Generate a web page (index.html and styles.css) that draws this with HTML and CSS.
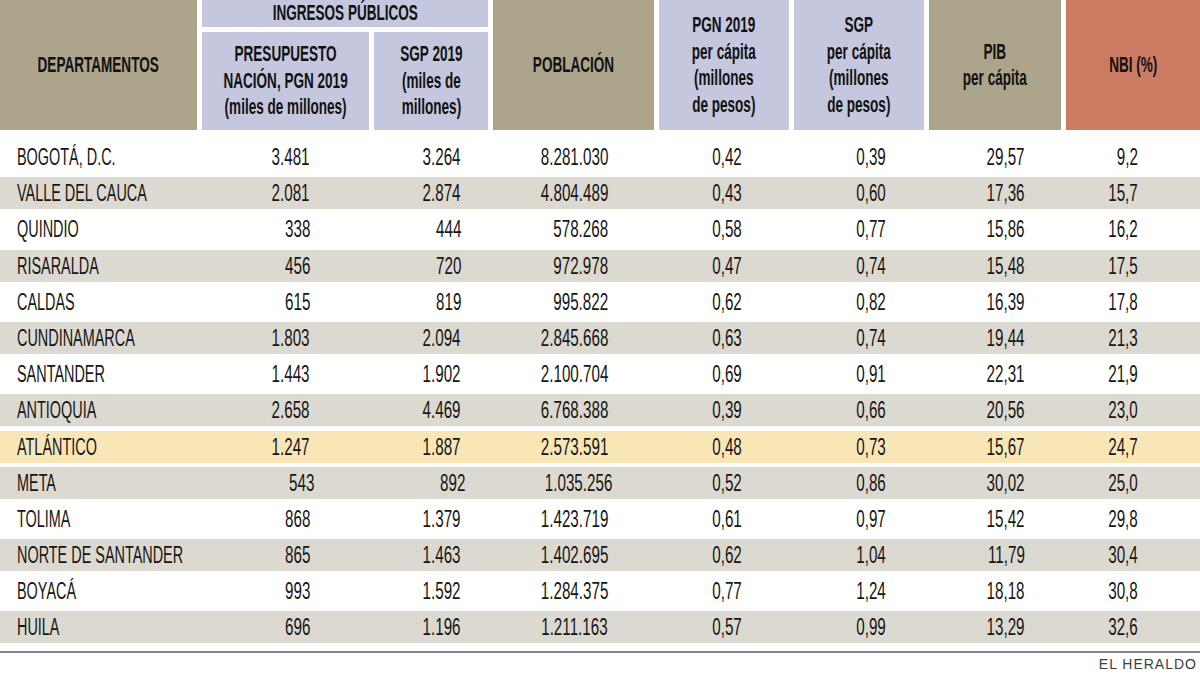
FILE: index.html
```html
<!DOCTYPE html>
<html lang="es">
<head>
<meta charset="utf-8">
<title>Ingresos públicos por departamento</title>
<link rel="stylesheet" href="styles.css">
</head>
<body>
<div class="page">
  <div class="head">
    <div class="hc khaki rows2"><span class="t">DEPARTAMENTOS</span></div>
    <div class="hc blue cols2 top"><span class="t">INGRESOS PÚBLICOS</span></div>
    <div class="hc khaki rows2 pob"><span class="t">POBLACIÓN</span></div>
    <div class="hc blue rows2 pgnpc"><span class="t">PGN 2019<br>per cápita<br>(millones<br>de pesos)</span></div>
    <div class="hc blue rows2 sgppc"><span class="t">SGP<br>per cápita<br>(millones<br>de pesos)</span></div>
    <div class="hc khaki rows2 pib"><span class="t">PIB<br>per cápita</span></div>
    <div class="hc red rows2 nbi"><span class="t">NBI (%)</span></div>
    <div class="hc blue sub1"><span class="t">PRESUPUESTO<br>NACIÓN, PGN 2019<br>(miles de millones)</span></div>
    <div class="hc blue sub2"><span class="t">SGP 2019<br>(miles de<br>millones)</span></div>
  </div>

  <div class="body">
    <div class="row"><div class="name"><span class="n">BOGOTÁ, D.C.</span></div><div class="v c2"><span class="n">3.481</span></div><div class="v c3"><span class="n">3.264</span></div><div class="v c4"><span class="n">8.281.030</span></div><div class="v c5"><span class="n">0,42</span></div><div class="v c6"><span class="n">0,39</span></div><div class="v c7"><span class="n">29,57</span></div><div class="v c8"><span class="n">9,2</span></div></div>
    <div class="row alt"><div class="name"><span class="n">VALLE DEL CAUCA</span></div><div class="v c2"><span class="n">2.081</span></div><div class="v c3"><span class="n">2.874</span></div><div class="v c4"><span class="n">4.804.489</span></div><div class="v c5"><span class="n">0,43</span></div><div class="v c6"><span class="n">0,60</span></div><div class="v c7"><span class="n">17,36</span></div><div class="v c8"><span class="n">15,7</span></div></div>
    <div class="row"><div class="name"><span class="n">QUINDIO</span></div><div class="v c2"><span class="n">338</span></div><div class="v c3"><span class="n">444</span></div><div class="v c4"><span class="n">578.268</span></div><div class="v c5"><span class="n">0,58</span></div><div class="v c6"><span class="n">0,77</span></div><div class="v c7"><span class="n">15,86</span></div><div class="v c8"><span class="n">16,2</span></div></div>
    <div class="row alt"><div class="name"><span class="n">RISARALDA</span></div><div class="v c2"><span class="n">456</span></div><div class="v c3"><span class="n">720</span></div><div class="v c4"><span class="n">972.978</span></div><div class="v c5"><span class="n">0,47</span></div><div class="v c6"><span class="n">0,74</span></div><div class="v c7"><span class="n">15,48</span></div><div class="v c8"><span class="n">17,5</span></div></div>
    <div class="row"><div class="name"><span class="n">CALDAS</span></div><div class="v c2"><span class="n">615</span></div><div class="v c3"><span class="n">819</span></div><div class="v c4"><span class="n">995.822</span></div><div class="v c5"><span class="n">0,62</span></div><div class="v c6"><span class="n">0,82</span></div><div class="v c7"><span class="n">16,39</span></div><div class="v c8"><span class="n">17,8</span></div></div>
    <div class="row alt"><div class="name"><span class="n">CUNDINAMARCA</span></div><div class="v c2"><span class="n">1.803</span></div><div class="v c3"><span class="n">2.094</span></div><div class="v c4"><span class="n">2.845.668</span></div><div class="v c5"><span class="n">0,63</span></div><div class="v c6"><span class="n">0,74</span></div><div class="v c7"><span class="n">19,44</span></div><div class="v c8"><span class="n">21,3</span></div></div>
    <div class="row"><div class="name"><span class="n">SANTANDER</span></div><div class="v c2"><span class="n">1.443</span></div><div class="v c3"><span class="n">1.902</span></div><div class="v c4"><span class="n">2.100.704</span></div><div class="v c5"><span class="n">0,69</span></div><div class="v c6"><span class="n">0,91</span></div><div class="v c7"><span class="n">22,31</span></div><div class="v c8"><span class="n">21,9</span></div></div>
    <div class="row alt"><div class="name"><span class="n">ANTIOQUIA</span></div><div class="v c2"><span class="n">2.658</span></div><div class="v c3"><span class="n">4.469</span></div><div class="v c4"><span class="n">6.768.388</span></div><div class="v c5"><span class="n">0,39</span></div><div class="v c6"><span class="n">0,66</span></div><div class="v c7"><span class="n">20,56</span></div><div class="v c8"><span class="n">23,0</span></div></div>
    <div class="row hl"><div class="name"><span class="n">ATLÁNTICO</span></div><div class="v c2"><span class="n">1.247</span></div><div class="v c3"><span class="n">1.887</span></div><div class="v c4"><span class="n">2.573.591</span></div><div class="v c5"><span class="n">0,48</span></div><div class="v c6"><span class="n">0,73</span></div><div class="v c7"><span class="n">15,67</span></div><div class="v c8"><span class="n">24,7</span></div></div>
    <div class="row alt shift"><div class="name"><span class="n">META</span></div><div class="v c2"><span class="n">543</span></div><div class="v c3"><span class="n">892</span></div><div class="v c4"><span class="n">1.035.256</span></div><div class="v c5"><span class="n">0,52</span></div><div class="v c6"><span class="n">0,86</span></div><div class="v c7"><span class="n">30,02</span></div><div class="v c8"><span class="n">25,0</span></div></div>
    <div class="row"><div class="name"><span class="n">TOLIMA</span></div><div class="v c2"><span class="n">868</span></div><div class="v c3"><span class="n">1.379</span></div><div class="v c4"><span class="n">1.423.719</span></div><div class="v c5"><span class="n">0,61</span></div><div class="v c6"><span class="n">0,97</span></div><div class="v c7"><span class="n">15,42</span></div><div class="v c8"><span class="n">29,8</span></div></div>
    <div class="row alt"><div class="name"><span class="n">NORTE DE SANTANDER</span></div><div class="v c2"><span class="n">865</span></div><div class="v c3"><span class="n">1.463</span></div><div class="v c4"><span class="n">1.402.695</span></div><div class="v c5"><span class="n">0,62</span></div><div class="v c6"><span class="n">1,04</span></div><div class="v c7"><span class="n">11,79</span></div><div class="v c8"><span class="n">30,4</span></div></div>
    <div class="row"><div class="name"><span class="n">BOYACÁ</span></div><div class="v c2"><span class="n">993</span></div><div class="v c3"><span class="n">1.592</span></div><div class="v c4"><span class="n">1.284.375</span></div><div class="v c5"><span class="n">0,77</span></div><div class="v c6"><span class="n">1,24</span></div><div class="v c7"><span class="n">18,18</span></div><div class="v c8"><span class="n">30,8</span></div></div>
    <div class="row alt"><div class="name"><span class="n">HUILA</span></div><div class="v c2"><span class="n">696</span></div><div class="v c3"><span class="n">1.196</span></div><div class="v c4"><span class="n">1.211.163</span></div><div class="v c5"><span class="n">0,57</span></div><div class="v c6"><span class="n">0,99</span></div><div class="v c7"><span class="n">13,29</span></div><div class="v c8"><span class="n">32,6</span></div></div>
  </div>

  <div class="foot">EL HERALDO</div>
</div>
</body>
</html>
```

FILE: styles.css
```css
* { box-sizing: border-box; }

html, body {
  margin: 0;
  padding: 0;
  background: #ffffff;
}

body {
  font-family: "Liberation Sans", Arial, sans-serif;
  color: #1b1b1b;
  width: 1200px;
  height: 675px;
  overflow: hidden;
}

.page {
  width: 1200px;
}

/* ---------- header ---------- */
.head {
  display: grid;
  grid-template-columns: 197px 167px 114px 161px 130px 130px 132px 134px;
  grid-template-rows: 27px 98px;
  gap: 5px;
  height: 130px;
}

.hc {
  display: flex;
  align-items: center;
  justify-content: center;
  text-align: center;
  font-weight: bold;
  font-size: 21.5px;
  line-height: 26.5px;
  color: #111111;
  overflow: visible;
  min-width: 0;
}

.hc .t {
  display: inline-block;
  flex-shrink: 0;
  white-space: nowrap;
  transform: scaleX(0.63);
  transform-origin: center center;
}

.hc.top { line-height: 27px; }

.khaki { background: #aca58c; }
.blue { background: #c4c7dd; }
.red { background: #cc7b63; }

.rows2 { grid-row: 1 / 3; }
.cols2 { grid-column: 2 / 4; grid-row: 1; }
.sub1 { grid-column: 2; grid-row: 2; }
.sub2 { grid-column: 3; grid-row: 2; }
.pob { grid-column: 4; }
.pgnpc { grid-column: 5; }
.sgppc { grid-column: 6; }
.pib { grid-column: 7; }
.nbi { grid-column: 8; }

/* ---------- body rows ---------- */
.body {
  margin-top: 11px;
  display: flex;
  flex-direction: column;
  gap: 4.2px;
}

.row {
  display: grid;
  grid-template-columns: 197px 167px 114px 161px 130px 130px 132px 134px;
  column-gap: 5px;
  height: 32px;
  line-height: 32px;
  font-size: 23px;
  color: #161616;
}

.row.alt { background: #dcd9d1; }
.row.hl { background: #f8e6b7; }

.name {
  padding-left: 17px;
  white-space: nowrap;
}

.name .n {
  display: inline-block;
  transform: scaleX(0.627);
  transform-origin: left center;
}

.v {
  text-align: right;
  white-space: nowrap;
}

.v .n {
  display: inline-block;
  transform: scaleX(0.66);
  transform-origin: right center;
}

.c2 { padding-right: 59px; }
.c3 { padding-right: 27px; }
.c4 { padding-right: 46px; }
.c5 { padding-right: 47px; }
.c6 { padding-right: 38px; }
.c7 { padding-right: 36px; }
.c8 { padding-right: 62px; }

.row.shift .c2,
.row.shift .c3,
.row.shift .c4 { margin-right: -4px; }

/* ---------- footer ---------- */
.foot {
  margin-top: 8px;
  border-top: 2px solid #858585;
  padding-top: 3px;
  padding-right: 3px;
  text-align: right;
  font-size: 14px;
  line-height: 16px;
  letter-spacing: 1px;
  color: #3d3d3d;
}
```
